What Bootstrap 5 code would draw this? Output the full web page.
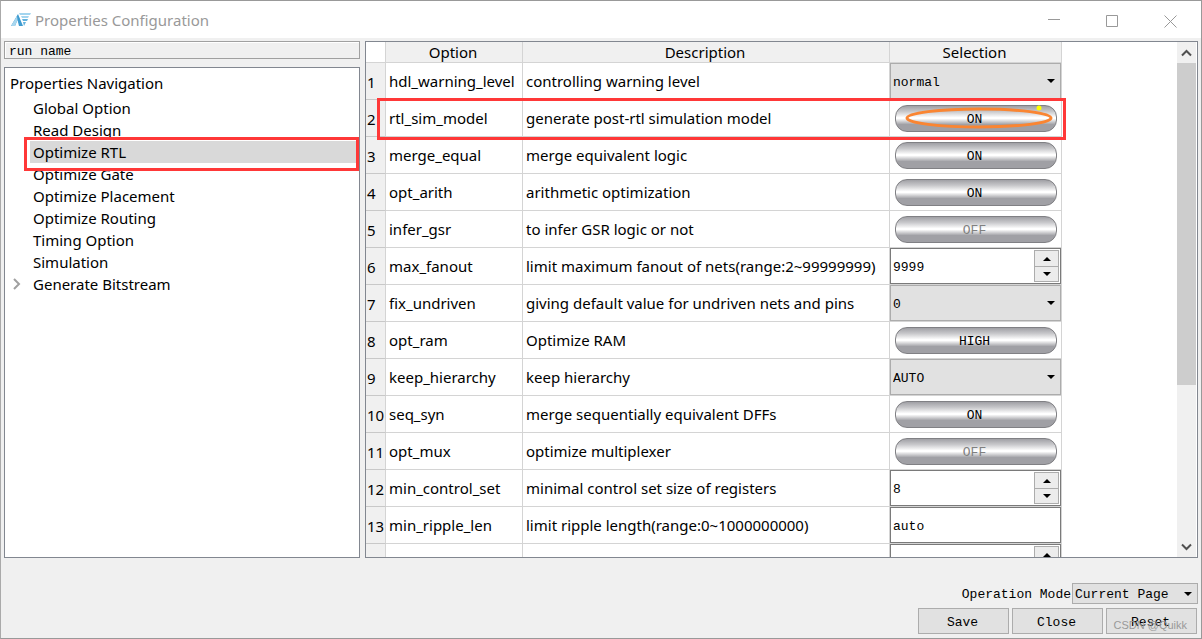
<!DOCTYPE html>
<html lang="en">
<head>
<meta charset="utf-8">
<meta name="viewport" content="width=device-width, initial-scale=1">
<title>Properties Configuration</title>
<link href="https://cdn.jsdelivr.net/npm/bootstrap@5.3.0/dist/css/bootstrap.min.css" rel="stylesheet">
<style>
  :root { --face: #f0f0f0; --rule: #d4d4d4; --frame: #828790; --red: #ff3838; }
  body { background: var(--face); color: #000; font: 15px/22px "Noto Sans", "Open Sans", sans-serif; }
  .window { border: 1px solid #999; border-left-color: #aaa; }
  .titlebar { height: 37px; color: #999; padding: 0 2px 0 9px; }
  .caption-btn { width: 58px; height: 36px; border: 0; background: none; padding: 0; }
  .mono { font-family: "Liberation Mono", "DejaVu Sans Mono", monospace; font-size: 13px; line-height: 16px; }
  .work { padding: 3px 3px 0; gap: 5px; }
  .side { flex: 0 0 356px; gap: 8px; }
  .run-name { height: 18px; border: 1px solid #a0a0a0; box-shadow: inset 1px 1px #fff; padding: 2px 4px; }
  .framed { border: 1px solid var(--frame); background: #fff; }
  .tree { padding: 4px 2px; }
  .tree-root { height: 25px; line-height: 22px; padding-left: 3px; }
  .tree ul { padding-left: 23px; }
  .tree li { height: 22px; }
  .tree a { display: block; height: 22px; padding-left: 3px; color: #000; text-decoration: none; }
  .tree a.active { background: #d9d9d9; }
  .marked::after { content: ""; position: absolute; z-index: 2; border: 3px solid var(--red); pointer-events: none; }
  .tree .marked::after { inset: -4px -2px -8px -6px; }
  .twisty { position: absolute; left: -18px; top: 5px; }
  .options { table-layout: fixed; width: 696px; border-collapse: separate; border-spacing: 0; }
  .options th, .options td { border: solid var(--rule); border-width: 0 1px 1px 0; font-weight: 400; white-space: nowrap; padding: 0 0 0 3px; height: 37px; }
  .options thead th { height: 21px; line-height: 20px; padding: 0 2px 0 0; background: var(--face); text-align: center; }
  .options thead td { height: 21px; }
  .options tbody th { background: var(--face); padding: 2px 0 0 1px; border-bottom-color: #c8c8c8; }
  .options td.ctl { padding: 0; }
  .options tr.marked::after { inset: -2px -4px -3px 11px; }
  .field { display: block; width: 100%; height: 36px; border: 1px solid #7a7a7a; border-radius: 0; background: #fff; color: #000; padding: 2px 2px 0; }
  .pick { appearance: none; border: 1px solid #acacac; border-radius: 0; color: #000; padding: 3px 16px 0 2px;
    background: #e1e1e1 url("data:image/svg+xml,%3Csvg xmlns='http://www.w3.org/2000/svg' width='8' height='4'%3E%3Cpath d='M0 0h8L4 4z'/%3E%3C/svg%3E") no-repeat right 5px center; }
  .ctl .pick { display: block; width: 100%; height: 36px; }
  .toggle { display: block; width: 162px; height: 27px; margin: 0 auto; padding: 4px 2px 0 0; color: #000;
    border: 1px solid #808084; border-radius: 12px; background: linear-gradient(#a0a0a5, #c8c8cb 22%, #fff 46%, #fff 50%, #a0a0a5 74%, #a0a0a5); }
  .toggle:disabled { color: #808080; }
  .spin { right: 2px; top: 2px; width: 25px; height: 32px; }
  .spin button { height: 17px; flex: none; padding: 0; line-height: 0; border: 1px solid #acacac; background: #ececec; }
  .spin button + button { margin-top: -1px; height: 16px; }
  .ring { left: 12px; top: 5px; z-index: 3; pointer-events: none; }
  .scroller { width: 19px; margin-right: 1px; background: var(--face); }
  .scroller button { height: 21px; border: 0; padding: 0; background: none; line-height: 0; }
  .thumb { flex: 0 0 68%; background: #cdcdcd; }
  .foot { padding: 25px 3px 4px; gap: 4px; }
  .foot label { padding: 2px 1px 0 0; }
  .foot .pick { width: 126px; height: 21px; padding: 2px 16px 0 2px; }
  .push { width: 91px; height: 26px; border: 1px solid #acacac; background: #e1e1e1; color: #000; padding: 3px 2px 0 0; }
  .stamp { right: 11px; bottom: 2px; font: 11px/14px "Liberation Sans", sans-serif; color: #999; pointer-events: none; }
</style>
</head>
<body>
<div class="window vh-100 d-flex flex-column overflow-hidden">
  <header class="titlebar d-flex align-items-center bg-white flex-shrink-0">
    <svg width="21" height="16" viewBox="0 0 21 16" aria-hidden="true">
      <path d="M1 14 8 2l5 12H9L7.500 8 5 14z" fill="#3e9bd0"/>
      <path d="M1 14 7 4l.5 4L5 14z" fill="#a9d7ef"/>
      <path d="M9 1h12l-1 2H10zM11 4h8l-1 2h-6z" fill="#a3d5ef"/><path d="M12 7h6l-1 2h-4zM13 10h3l-2 4z" fill="#62b2dd"/>
    </svg>
    <span class="ms-1">Properties Configuration</span>
    <div class="ms-auto d-flex">
      <button class="caption-btn" aria-label="Minimize"><svg width="13" height="13" stroke="#999" fill="none"><path d="M0 4.500h12"/></svg></button>
      <button class="caption-btn" aria-label="Maximize"><svg width="13" height="13" stroke="#999" fill="none"><path d="M.5.5h11v11H.5z"/></svg></button>
      <button class="caption-btn" aria-label="Close window"><svg width="13" height="13" stroke="#999" fill="none"><path d="M.5.5l12 12M12.500.5l-12 12"/></svg></button>
    </div>
  </header>

  <main class="work d-flex flex-grow-1 overflow-hidden">
    <aside class="side d-flex flex-column">
      <div class="run-name mono">run name</div>
      <nav class="tree framed flex-grow-1" aria-label="Properties Navigation">
        <div class="tree-root">Properties Navigation</div>
        <ul class="list-unstyled m-0">
          <li><a href="#">Global Option</a></li>
          <li><a href="#">Read Design</a></li>
          <li class="marked position-relative"><a class="active" href="#">Optimize RTL</a></li>
          <li><a href="#">Optimize Gate</a></li>
          <li><a href="#">Optimize Placement</a></li>
          <li><a href="#">Optimize Routing</a></li>
          <li><a href="#">Timing Option</a></li>
          <li><a href="#">Simulation</a></li>
          <li class="position-relative"><svg class="twisty" width="10" height="12" fill="none" stroke="#a0a0a0" stroke-width="2"><path d="M2 1l5 5-5 5"/></svg><a href="#">Generate Bitstream</a></li>
        </ul>
      </nav>
    </aside>

    <section class="framed d-flex flex-grow-1 overflow-hidden">
      <div class="flex-grow-1 overflow-hidden">
        <table class="options">
          <colgroup><col style="width:20px"><col style="width:137px"><col style="width:367px"><col style="width:172px"></colgroup>
          <thead><tr><td></td><th>Option</th><th>Description</th><th>Selection</th></tr></thead>
          <tbody>
            <tr><th>1</th><td>hdl_warning_level</td><td>controlling warning level</td><td class="ctl"><select class="pick mono" aria-label="hdl_warning_level"><option>normal</option></select></td></tr>
            <tr class="marked position-relative"><th>2</th><td>rtl_sim_model</td><td>generate post-rtl simulation model</td><td class="ctl position-relative"><button class="toggle mono">ON</button><svg class="ring position-absolute" width="152" height="26" fill="none"><ellipse cx="77" cy="13" rx="72" ry="9" stroke="#fa8532" stroke-width="3"/><circle cx="137" cy="3" r="2.500" fill="#ff0"/></svg></td></tr>
            <tr><th>3</th><td>merge_equal</td><td>merge equivalent logic</td><td class="ctl"><button class="toggle mono">ON</button></td></tr>
            <tr><th>4</th><td>opt_arith</td><td>arithmetic optimization</td><td class="ctl"><button class="toggle mono">ON</button></td></tr>
            <tr><th>5</th><td>infer_gsr</td><td>to infer GSR logic or not</td><td class="ctl"><button class="toggle mono" disabled>OFF</button></td></tr>
            <tr><th>6</th><td>max_fanout</td><td>limit maximum fanout of nets(range:2~99999999)</td><td class="ctl"><div class="position-relative"><input class="field mono" aria-label="max_fanout" value="9999"><div class="spin position-absolute d-flex flex-column"><button aria-label="Increase"><svg width="8" height="4"><path d="M0 4h8L4 0z"/></svg></button><button aria-label="Decrease"><svg width="8" height="4"><path d="M0 0h8L4 4z"/></svg></button></div></div></td></tr>
            <tr><th>7</th><td>fix_undriven</td><td>giving default value for undriven nets and pins</td><td class="ctl"><select class="pick mono" aria-label="fix_undriven"><option>0</option></select></td></tr>
            <tr><th>8</th><td>opt_ram</td><td>Optimize RAM</td><td class="ctl"><button class="toggle mono">HIGH</button></td></tr>
            <tr><th>9</th><td>keep_hierarchy</td><td>keep hierarchy</td><td class="ctl"><select class="pick mono" aria-label="keep_hierarchy"><option>AUTO</option></select></td></tr>
            <tr><th>10</th><td>seq_syn</td><td>merge sequentially equivalent DFFs</td><td class="ctl"><button class="toggle mono">ON</button></td></tr>
            <tr><th>11</th><td>opt_mux</td><td>optimize multiplexer</td><td class="ctl"><button class="toggle mono" disabled>OFF</button></td></tr>
            <tr><th>12</th><td>min_control_set</td><td>minimal control set size of registers</td><td class="ctl"><div class="position-relative"><input class="field mono" aria-label="min_control_set" value="8"><div class="spin position-absolute d-flex flex-column"><button aria-label="Increase"><svg width="8" height="4"><path d="M0 4h8L4 0z"/></svg></button><button aria-label="Decrease"><svg width="8" height="4"><path d="M0 0h8L4 4z"/></svg></button></div></div></td></tr>
            <tr><th>13</th><td>min_ripple_len</td><td>limit ripple length(range:0~1000000000)</td><td class="ctl"><input class="field mono" aria-label="min_ripple_len" value="auto"></td></tr>
            <tr><th>14</th><td>max_oh2bin_len</td><td>limit onehot address width for mux operand</td><td class="ctl"><div class="position-relative"><input class="field mono" aria-label="max_oh2bin_len"><div class="spin position-absolute d-flex flex-column"><button aria-label="Increase"><svg width="8" height="4"><path d="M0 4h8L4 0z"/></svg></button><button aria-label="Decrease"><svg width="8" height="4"><path d="M0 0h8L4 4z"/></svg></button></div></div></td></tr>
          </tbody>
        </table>
      </div>
      <div class="scroller d-flex flex-column flex-shrink-0">
        <button aria-label="Scroll up"><svg width="11" height="8" fill="none" stroke="#505050" stroke-width="2"><path d="M1 6.500l4.500-4.500L10 6.500"/></svg></button>
        <div class="flex-grow-1 d-flex flex-column"><div class="thumb"></div></div>
        <button aria-label="Scroll down"><svg width="11" height="8" fill="none" stroke="#505050" stroke-width="2"><path d="M1 1.500l4.500 4.500L10 1.500"/></svg></button>
      </div>
    </section>
  </main>

  <footer class="foot d-flex flex-column align-items-end flex-shrink-0">
    <div class="d-flex align-items-center">
      <label class="mono" for="mode">Operation Mode</label>
      <select id="mode" class="pick mono"><option>Current Page</option></select>
    </div>
    <div class="position-relative d-flex" style="gap:3px;padding-right:1px">
      <button class="push mono">Save</button>
      <button class="push mono">Close</button>
      <button class="push mono">Reset</button>
      <span class="stamp position-absolute">CSDN @Quikk</span>
    </div>
  </footer>
</div>
<script src="https://cdn.jsdelivr.net/npm/bootstrap@5.3.0/dist/js/bootstrap.bundle.min.js"></script>
</body>
</html>
